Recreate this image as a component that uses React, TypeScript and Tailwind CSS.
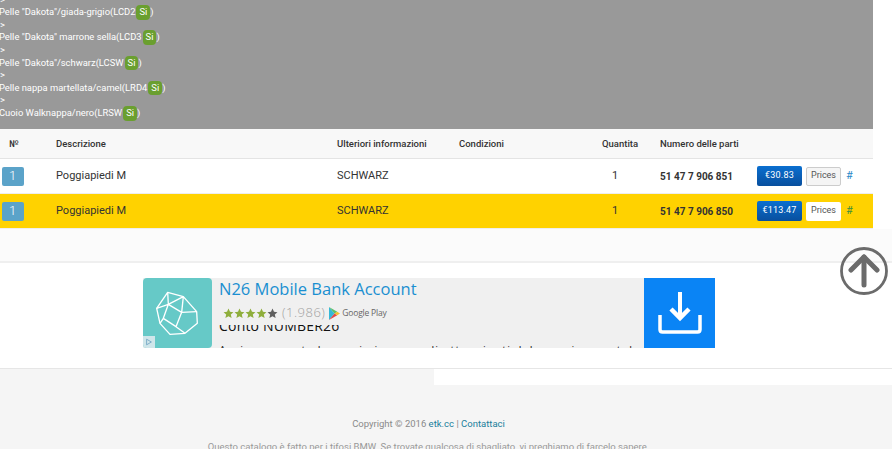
const options = [
  { text: 'Pelle "Dakota"/giada-grigio(LCD2', tail: ")" },
  { text: 'Pelle "Dakota" marrone sella(LCD3', tail: ")" },
  { text: 'Pelle "Dakota"/schwarz(LCSW', tail: ")" },
  { text: "Pelle nappa martellata/camel(LRD4", tail: ")" },
  { text: "Cuoio Walknappa/nero(LRSW", tail: ")" },
];

const parts = [
  { number: "51 47 7 906 851", price: "€30.83", active: false },
  { number: "51 47 7 906 850", price: "€113.47", active: true },
];

const columns = "grid grid-cols-[56px_281px_122px_143px_58px_97px_116px] items-center";

function Star({ filled }: { filled: boolean }) {
  return (
    <svg viewBox="0 0 20 20" className="h-[11px] w-[11px]">
      <path
        d="M10 1l2.700 6 6.300.6-4.800 4.200 1.500 6.400L10 14.800 4.300 18.200l1.500-6.400L1 7.600 7.300 7z"
        fill={filled ? "#8fae3c" : "#5f5f5f"}
      />
    </svg>
  );
}

function PartRow({ number, price, active }: { number: string; price: string; active: boolean }) {
  return (
    <div
      className={`${columns} h-[35px] border-b border-[#eeeeee] text-[11px] text-[#333333] ${
        active ? "bg-[#ffd200]" : "bg-white"
      }`}
    >
      <div className="pl-[2px]">
        <div className="flex h-[19px] w-[22px] items-center justify-center rounded-[2px] bg-[#5ba3c9] pr-[1px] text-[13px] font-light text-white">
          1
        </div>
      </div>
      <div>Poggiapiedi M</div>
      <div>SCHWARZ</div>
      <div />
      <div className="pl-[10px]">1</div>
      <div className="text-[10px] font-bold">{number}</div>
      <div className="flex items-center">
        <div className="flex h-[20px] w-[45px] items-center justify-center rounded-[2px] bg-linear-to-b from-[#0a6fd0] to-[#084f9e] text-[9px] tracking-[0.2px] text-white">
          {price}
        </div>
        <div
          className={`ml-[4px] flex h-[19px] w-[35px] items-center justify-center rounded-[2px] text-[9px] text-[#555555] ${
            active ? "bg-white" : "border border-[#cccccc] bg-[#f5f5f5]"
          }`}
        >
          Prices
        </div>
        <span className={`ml-[5px] text-[11px] ${active ? "text-[#3c8f3c]" : "text-[#2a88c8]"}`}>#</span>
      </div>
    </div>
  );
}

function Ad() {
  return (
    <div className="ml-[143px] flex h-[70px] w-[572px] overflow-hidden bg-[#f0f0f0] font-['Open_Sans',sans-serif]">
      <div className="relative w-[69px] shrink-0 overflow-hidden rounded-[4px] bg-[#66c9c7]">
        <svg
          viewBox="0 0 240 228"
          className="absolute -left-[3px] -top-[3px] h-[76px] w-[80px]"
          fill="none"
          stroke="#ffffff"
          strokeWidth="4"
          strokeLinejoin="round"
        >
          <path d="M83 52 130 65 170 110 172 145 135 175 90 178 60 145 50 100z" />
          <path d="M50 100 85 88 130 65M83 52 85 88 125 112 170 110M130 65 125 112 108 155 135 175M85 88 70 130 108 155M60 145 70 130" />
        </svg>
        <div className="absolute bottom-0 left-0 flex h-[12px] w-[12px] items-center justify-center bg-[#cfe6ea]">
          <svg viewBox="0 0 10 10" className="h-[8px] w-[8px]" fill="none" stroke="#6a9fc0" strokeWidth="1">
            <path d="M2 1.500 8 5 2 8.500z" />
          </svg>
        </div>
      </div>
      <div className="min-w-0 flex-1 pl-[7px]">
        <div className="text-[16.500px] leading-[21px] text-[#1a8fd0]">N26 Mobile Bank Account</div>
        {/* the rating row sits over the top of the line below, as in the ad */}
        <div className="relative z-10 flex h-[26px] items-center bg-[#f0f0f0] pl-[4px] pt-[2px]">
          <Star filled />
          <Star filled />
          <Star filled />
          <Star filled />
          <Star filled={false} />
          <span className="ml-[4px] text-[13px] font-light tracking-[0.5px] text-[#a0a0a0]">(1.986)</span>
          <svg viewBox="0 0 12 14" className="ml-[4px] h-[13px] w-[11px]">
            <path d="M0 0 6 7 0 14z" fill="#35b8d8" />
            <path d="M0 0 9 5 6 7z" fill="#5cbf6a" />
            <path d="M0 14 9 9 6 7z" fill="#e04a4a" />
            <path d="M9 5 12 7 9 9 6 7z" fill="#f5c02e" />
          </svg>
          <span className="ml-[2px] text-[8.500px] tracking-[-0.2px] text-[#666666]">Google Play</span>
        </div>
        <div className="-mt-[8px] text-[14px] leading-[18px] tracking-[0.2px] text-[#111111]">Conto NUMBER26</div>
        <div className="mt-[7px] whitespace-nowrap text-[11px] tracking-[1px] text-[#222222]">
          Aprire un conto bancario in meno di otto minuti dal proprio smartphone
        </div>
      </div>
      <div className="flex w-[71px] shrink-0 items-center justify-center bg-[#0a84f5]">
        <svg viewBox="0 0 44 44" className="h-[44px] w-[44px]" fill="none" stroke="#ffffff" strokeWidth="3.500">
          <path d="M22 1V24" strokeWidth="4" />
          <path d="M13 18 22 27 31 18" strokeWidth="4.500" />
          <path d="M2 24V38.500Q2 41 4.500 41H39.500Q42 41 42 38.500V24" />
        </svg>
      </div>
    </div>
  );
}

export default function App() {
  return (
    <div className="relative h-[449px] w-[892px] overflow-hidden bg-white font-['Roboto',sans-serif]">
      <div className="w-[873px]">
        <div className="flex h-[129px] flex-col justify-end overflow-hidden bg-[#999999] pb-[9.500px] text-[9.400px] leading-[12.600px] text-white">
          {options.map((o) => (
            <div key={o.text}>
              <div>&gt;</div>
              <div className="-ml-[1px] flex items-center whitespace-pre">
                {o.text}
                <span className="-my-[1px] ml-[1px] rounded-[4px] bg-[#6a9f2f] px-[3px] py-[1px]">Si</span> {o.tail}
              </div>
            </div>
          ))}
        </div>
        <div className={`${columns} h-[30px] border-b border-[#e4e4e4] bg-[#f8f8f8] pt-[1px] text-[9.500px] font-medium text-[#333333]`}>
          <div className="pl-[9px]">№</div>
          <div>Descrizione</div>
          <div>Ulteriori informazioni</div>
          <div>Condizioni</div>
          <div>Quantita</div>
          <div>Numero delle parti</div>
          <div />
        </div>
        {parts.map((p) => (
          <PartRow key={p.number} {...p} />
        ))}
      </div>
      <div className="h-[34px] border-b-2 border-[#efefef] bg-[#fbfbfb]" />
      <div className="h-[105px] bg-white pt-[15px]">
        <Ad />
      </div>
      <div className="h-[81px] w-full border-t border-[#e6e6e6] bg-[#f5f5f5] pt-[48px] text-[9.500px] text-[#8a8a8a]">
        <div className="w-[857px] text-center">
          <div>
            Copyright © 2016 <span className="text-[#1a7f9c]">etk.cc</span> | <span className="text-[#1a7f9c]">Contattaci</span>
          </div>
          <div className="mt-[9px] whitespace-nowrap text-[#999999]">
            Questo catalogo è fatto per i tifosi BMW. Se trovate qualcosa di sbagliato, vi preghiamo di farcelo sapere.
          </div>
        </div>
      </div>
      <div className="absolute left-[434px] top-[369px] h-[16px] w-[458px] bg-white" />
      <svg viewBox="0 0 48 48" className="absolute left-[840px] top-[247px] h-[48px] w-[48px]" fill="none" stroke="#6b6b6b">
        <circle cx="24" cy="24" r="22.500" strokeWidth="2.800" />
        <path d="M24 38V10" strokeWidth="5" strokeLinecap="round" />
        <path d="M11 23 24 10 37 23" strokeWidth="5" strokeLinecap="round" strokeLinejoin="round" />
      </svg>
    </div>
  );
}
